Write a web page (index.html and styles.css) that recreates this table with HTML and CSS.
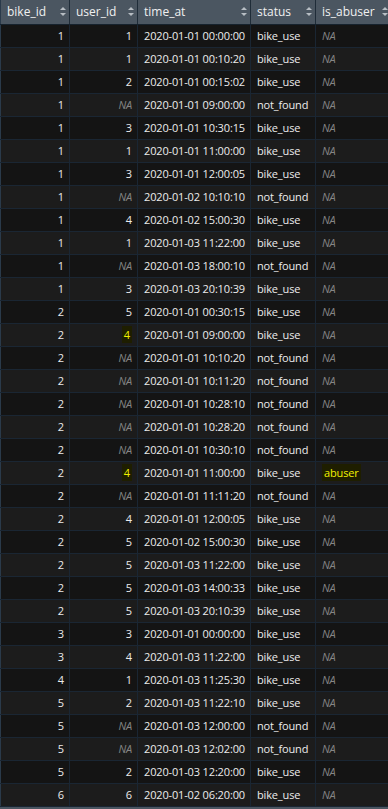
FILE: index.html
```html
<!DOCTYPE html>
<html>
<head>
<meta charset="utf-8">
<link rel="stylesheet" href="styles.css">
</head>
<body>
<div class="viewer">
<table class="grid">
<colgroup>
<col class="c1"><col class="c2"><col class="c3"><col class="c4"><col class="c5">
</colgroup>
<thead>
<tr>
<th>bike_id<span class="sort"></span></th>
<th>user_id<span class="sort"></span></th>
<th>time_at<span class="sort"></span></th>
<th>status<span class="sort"></span></th>
<th>is_abuser<span class="sort"></span></th>
</tr>
</thead>
<tbody id="rows"></tbody>
</table>
</div>
<script src="script.js"></script>
</body>
</html>
```
FILE: script.js
```js
const data = [
[1,1,"2020-01-01 00:00:00","bike_use",null],
[1,1,"2020-01-01 00:10:20","bike_use",null],
[1,2,"2020-01-01 00:15:02","bike_use",null],
[1,null,"2020-01-01 09:00:00","not_found",null],
[1,3,"2020-01-01 10:30:15","bike_use",null],
[1,1,"2020-01-01 11:00:00","bike_use",null],
[1,3,"2020-01-01 12:00:05","bike_use",null],
[1,null,"2020-01-02 10:10:10","not_found",null],
[1,4,"2020-01-02 15:00:30","bike_use",null],
[1,1,"2020-01-03 11:22:00","bike_use",null],
[1,null,"2020-01-03 18:00:10","not_found",null],
[1,3,"2020-01-03 20:10:39","bike_use",null],
[2,5,"2020-01-01 00:30:15","bike_use",null],
[2,"4h","2020-01-01 09:00:00","bike_use",null],
[2,null,"2020-01-01 10:10:20","not_found",null],
[2,null,"2020-01-01 10:11:20","not_found",null],
[2,null,"2020-01-01 10:28:10","not_found",null],
[2,null,"2020-01-01 10:28:20","not_found",null],
[2,null,"2020-01-01 10:30:10","not_found",null],
[2,"4h","2020-01-01 11:00:00","bike_use","abuser"],
[2,null,"2020-01-01 11:11:20","not_found",null],
[2,4,"2020-01-01 12:00:05","bike_use",null],
[2,5,"2020-01-02 15:00:30","bike_use",null],
[2,5,"2020-01-03 11:22:00","bike_use",null],
[2,5,"2020-01-03 14:00:33","bike_use",null],
[2,5,"2020-01-03 20:10:39","bike_use",null],
[3,3,"2020-01-01 00:00:00","bike_use",null],
[3,4,"2020-01-03 11:22:00","bike_use",null],
[4,1,"2020-01-03 11:25:30","bike_use",null],
[5,2,"2020-01-03 11:22:10","bike_use",null],
[5,null,"2020-01-03 12:00:00","not_found",null],
[5,null,"2020-01-03 12:02:00","not_found",null],
[5,2,"2020-01-03 12:20:00","bike_use",null],
[6,6,"2020-01-02 06:20:00","bike_use",null]
];
const tb = document.getElementById("rows");
const na = '<span class="na">NA</span>';
tb.innerHTML = data.map(r => {
  let u = r[1] === null ? na : (r[1] === "4h" ? '<span class="hl">4</span>' : '<span class="v">' + r[1] + '</span>');
  let a = r[4] === null ? na : '<span class="hl">' + r[4] + '</span>';
  return '<tr><td class="num"><span class="v">' + r[0] + '</span></td><td class="num">' + u +
    '</td><td>' + r[2] + '</td><td>' + r[3] + '</td><td>' + a + '</td></tr>';
}).join("");
```
FILE: styles.css
```css
html, body {
  margin: 0;
  padding: 0;
  background: #161616;
}
.viewer {
  width: 388px;
  height: 809px;
  overflow: hidden;
  background: #4b5661;
}
.grid {
  border-collapse: collapse;
  table-layout: fixed;
  width: 391px;
  font-family: "Open Sans", "Noto Sans", sans-serif;
  font-size: 11px;
  letter-spacing: -0.15px;
  color: #ececec;
  border-left: 1px solid #2a3a4a;
}
.c1 { width: 69px; }
.c2 { width: 68px; }
.c3 { width: 113px; }
.c4 { width: 65px; }
.c5 { width: 76px; }
th {
  position: relative;
  height: 24px;
  padding: 0 6px;
  box-sizing: border-box;
  background: #4b5661;
  color: #f0f0f0;
  font-weight: normal;
  text-align: left;
  border-right: 1px solid #1f2c38;
  border-bottom: 1px solid #16222d;
  font-size: 12px;
  letter-spacing: 0;
}
.sort {
  position: absolute;
  right: 3px;
  top: 7px;
  width: 6px;
  height: 9px;
}
.sort::before, .sort::after {
  content: "";
  position: absolute;
  left: 0;
  border-left: 3px solid transparent;
  border-right: 3px solid transparent;
}
.sort::before { top: 0; border-bottom: 3px solid #b8bec4; }
.sort::after { bottom: 0; border-top: 3px solid #b8bec4; }
td {
  height: 23px;
  padding: 0 5px 0 6px;
  box-sizing: border-box;
  border-right: 1px solid #1a2633;
  border-bottom: 1px solid #1a2633;
  white-space: nowrap;
  overflow: hidden;
  color: #ececec;
}
tbody tr:nth-child(odd) td { background: #141414; }
tbody tr:nth-child(even) td { background: #1c1c1c; }
td.num { text-align: right; }
.v { color: #ececec; }
.na {
  color: #858585;
  font-style: italic;
}
.hl {
  color: #f0f000;
  background: #1e1e00;
  padding: 1px 2px;
}
```
